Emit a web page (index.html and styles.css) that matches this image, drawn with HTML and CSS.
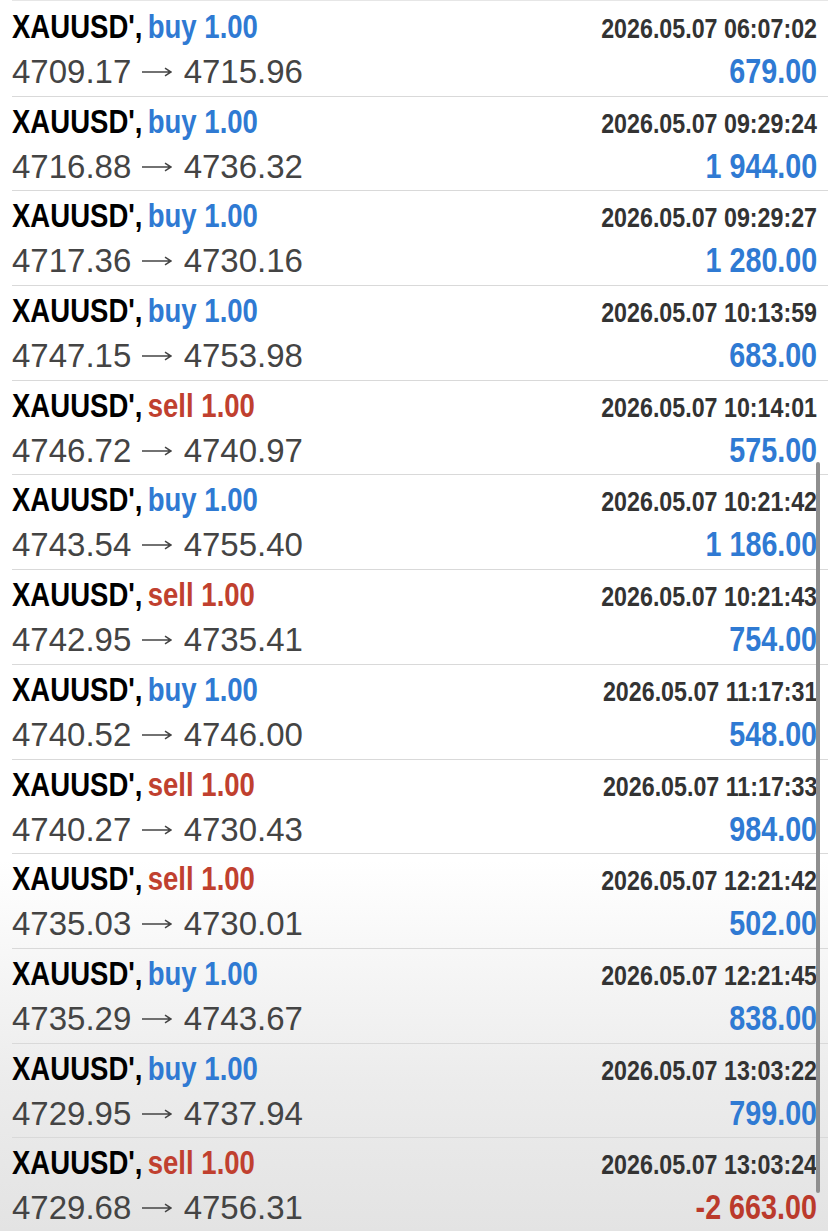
FILE: index.html
```html
<!DOCTYPE html>
<html lang="en">
<head>
  <meta charset="UTF-8">
  <meta name="viewport" content="width=device-width, initial-scale=1.0">
  <title>History</title>
  <link rel="stylesheet" href="styles.css">
</head>
<body>
  <div class="history">
    <div class="deal">
      <div class="deal-top"><span class="symbol">XAUUSD', <span class="buy">buy 1.00</span></span><span class="time">2026.05.07 06:07:02</span></div>
      <div class="deal-bottom"><span class="prices">4709.17 <svg class="arrow" viewBox="0 0 30 10"><path d="M0 5H28.5M23 1.2L29 5L23 8.8"/></svg> 4715.96</span><span class="profit">679.00</span></div>
    </div>
    <div class="deal">
      <div class="deal-top"><span class="symbol">XAUUSD', <span class="buy">buy 1.00</span></span><span class="time">2026.05.07 09:29:24</span></div>
      <div class="deal-bottom"><span class="prices">4716.88 <svg class="arrow" viewBox="0 0 30 10"><path d="M0 5H28.5M23 1.2L29 5L23 8.8"/></svg> 4736.32</span><span class="profit">1 944.00</span></div>
    </div>
    <div class="deal">
      <div class="deal-top"><span class="symbol">XAUUSD', <span class="buy">buy 1.00</span></span><span class="time">2026.05.07 09:29:27</span></div>
      <div class="deal-bottom"><span class="prices">4717.36 <svg class="arrow" viewBox="0 0 30 10"><path d="M0 5H28.5M23 1.2L29 5L23 8.8"/></svg> 4730.16</span><span class="profit">1 280.00</span></div>
    </div>
    <div class="deal">
      <div class="deal-top"><span class="symbol">XAUUSD', <span class="buy">buy 1.00</span></span><span class="time">2026.05.07 10:13:59</span></div>
      <div class="deal-bottom"><span class="prices">4747.15 <svg class="arrow" viewBox="0 0 30 10"><path d="M0 5H28.5M23 1.2L29 5L23 8.8"/></svg> 4753.98</span><span class="profit">683.00</span></div>
    </div>
    <div class="deal">
      <div class="deal-top"><span class="symbol">XAUUSD', <span class="sell">sell 1.00</span></span><span class="time">2026.05.07 10:14:01</span></div>
      <div class="deal-bottom"><span class="prices">4746.72 <svg class="arrow" viewBox="0 0 30 10"><path d="M0 5H28.5M23 1.2L29 5L23 8.8"/></svg> 4740.97</span><span class="profit">575.00</span></div>
    </div>
    <div class="deal">
      <div class="deal-top"><span class="symbol">XAUUSD', <span class="buy">buy 1.00</span></span><span class="time">2026.05.07 10:21:42</span></div>
      <div class="deal-bottom"><span class="prices">4743.54 <svg class="arrow" viewBox="0 0 30 10"><path d="M0 5H28.5M23 1.2L29 5L23 8.8"/></svg> 4755.40</span><span class="profit">1 186.00</span></div>
    </div>
    <div class="deal">
      <div class="deal-top"><span class="symbol">XAUUSD', <span class="sell">sell 1.00</span></span><span class="time">2026.05.07 10:21:43</span></div>
      <div class="deal-bottom"><span class="prices">4742.95 <svg class="arrow" viewBox="0 0 30 10"><path d="M0 5H28.5M23 1.2L29 5L23 8.8"/></svg> 4735.41</span><span class="profit">754.00</span></div>
    </div>
    <div class="deal">
      <div class="deal-top"><span class="symbol">XAUUSD', <span class="buy">buy 1.00</span></span><span class="time">2026.05.07 11:17:31</span></div>
      <div class="deal-bottom"><span class="prices">4740.52 <svg class="arrow" viewBox="0 0 30 10"><path d="M0 5H28.5M23 1.2L29 5L23 8.8"/></svg> 4746.00</span><span class="profit">548.00</span></div>
    </div>
    <div class="deal">
      <div class="deal-top"><span class="symbol">XAUUSD', <span class="sell">sell 1.00</span></span><span class="time">2026.05.07 11:17:33</span></div>
      <div class="deal-bottom"><span class="prices">4740.27 <svg class="arrow" viewBox="0 0 30 10"><path d="M0 5H28.5M23 1.2L29 5L23 8.8"/></svg> 4730.43</span><span class="profit">984.00</span></div>
    </div>
    <div class="deal">
      <div class="deal-top"><span class="symbol">XAUUSD', <span class="sell">sell 1.00</span></span><span class="time">2026.05.07 12:21:42</span></div>
      <div class="deal-bottom"><span class="prices">4735.03 <svg class="arrow" viewBox="0 0 30 10"><path d="M0 5H28.5M23 1.2L29 5L23 8.8"/></svg> 4730.01</span><span class="profit">502.00</span></div>
    </div>
    <div class="deal">
      <div class="deal-top"><span class="symbol">XAUUSD', <span class="buy">buy 1.00</span></span><span class="time">2026.05.07 12:21:45</span></div>
      <div class="deal-bottom"><span class="prices">4735.29 <svg class="arrow" viewBox="0 0 30 10"><path d="M0 5H28.5M23 1.2L29 5L23 8.8"/></svg> 4743.67</span><span class="profit">838.00</span></div>
    </div>
    <div class="deal">
      <div class="deal-top"><span class="symbol">XAUUSD', <span class="buy">buy 1.00</span></span><span class="time">2026.05.07 13:03:22</span></div>
      <div class="deal-bottom"><span class="prices">4729.95 <svg class="arrow" viewBox="0 0 30 10"><path d="M0 5H28.5M23 1.2L29 5L23 8.8"/></svg> 4737.94</span><span class="profit">799.00</span></div>
    </div>
    <div class="deal">
      <div class="deal-top"><span class="symbol">XAUUSD', <span class="sell">sell 1.00</span></span><span class="time">2026.05.07 13:03:24</span></div>
      <div class="deal-bottom"><span class="prices">4729.68 <svg class="arrow" viewBox="0 0 30 10"><path d="M0 5H28.5M23 1.2L29 5L23 8.8"/></svg> 4756.31</span><span class="profit loss">-2 663.00</span></div>
    </div>
  </div>
  <div class="scrollbar"></div>
</body>
</html>
```

FILE: styles.css
```css
html, body {
  margin: 0;
  padding: 0;
}

body {
  font-family: "Liberation Sans", Arial, sans-serif;
  width: 828px;
  height: 1231px;
  overflow: hidden;
  position: relative;
  background: linear-gradient(to bottom, #ffffff 0px, #ffffff 860px, #ececec 1080px, #e3e3e3 1231px);
}

.history {
  padding-top: 1px;
  border-top: 1px solid #e6e6e6;
  margin-left: 12px;
}

.deal {
  box-sizing: border-box;
  height: 94.7px;
  padding-right: 11px;
  border-bottom: 1px solid #d9d9d9;
}

.deal-top, .deal-bottom {
  display: flex;
  justify-content: space-between;
  align-items: baseline;
}

.deal-top {
  height: 46px;
  line-height: 46px;
  padding-top: 1px;
}

.deal-bottom {
  height: 44px;
  line-height: 44px;
}

/* no condensed face installed, so the bold columns are squeezed */
.symbol {
  display: inline-block;
  font-weight: bold;
  font-size: 34px;
  color: #000;
  transform: scaleX(0.81);
  transform-origin: left center;
}

.buy, .sell {
  margin-left: -3px;
}

.buy {
  color: #2f7ad3;
}

.sell {
  color: #c0402f;
}

.time {
  display: inline-block;
  font-weight: bold;
  font-size: 28px;
  color: #333;
  transform: scaleX(0.83);
  transform-origin: right center;
}

.prices {
  font-size: 33px;
  color: #444;
}

.arrow {
  width: 30px;
  height: 10px;
  margin: 0 2px;
  vertical-align: 6px;
  fill: none;
  stroke: #444;
  stroke-width: 1.5;
}

.profit {
  display: inline-block;
  font-weight: bold;
  font-size: 35px;
  color: #2f7ad3;
  transform: scaleX(0.82);
  transform-origin: right center;
}

.profit.loss {
  color: #bb3a2c;
}

.scrollbar {
  position: absolute;
  left: 816px;
  top: 462px;
  width: 4px;
  height: 731px;
  border-radius: 2px;
  background: #8f8f8f;
}
```
